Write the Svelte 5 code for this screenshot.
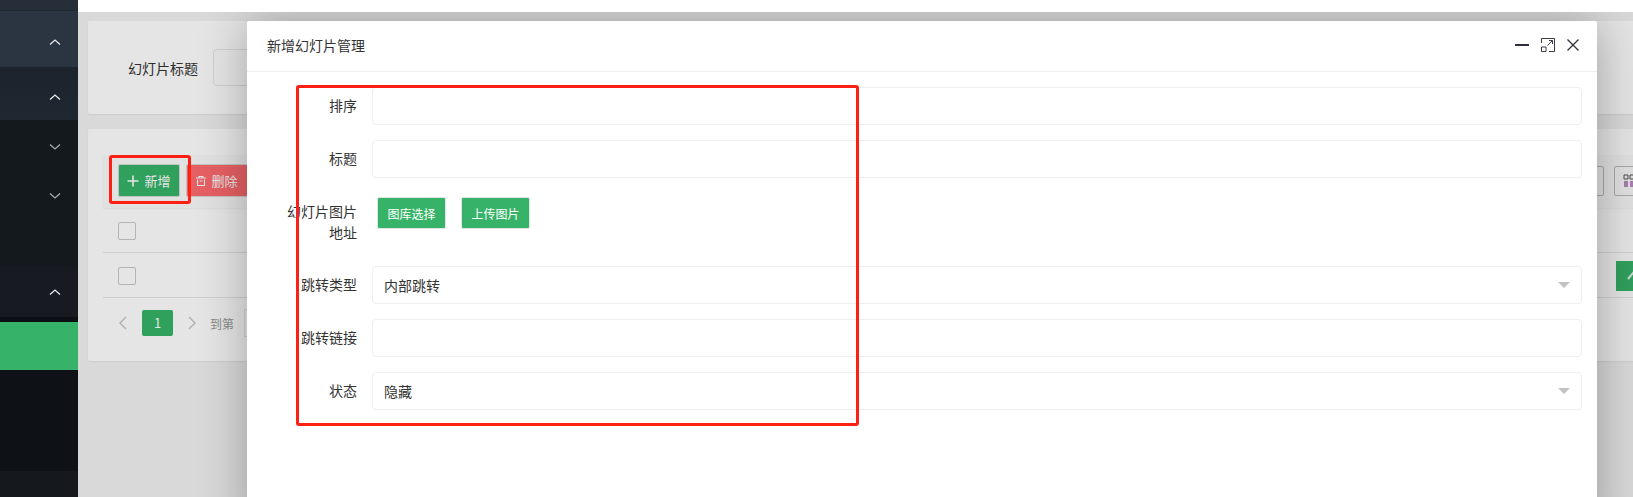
<script>
	const menu = [
		{ cls: "m1", dir: "up" },
		{ cls: "m2", dir: "up" },
		{ cls: "m3", dir: "down" },
		{ cls: "m4", dir: "down" },
		{ cls: "m5", dir: "none" },
		{ cls: "m6", dir: "up" },
	];
	const fields = [
		{ label: "跳转类型", value: "内部跳转", select: true },
		{ label: "跳转链接", value: "", select: false },
		{ label: "状态", value: "隐藏", select: true },
	];
</script>

<div class="page">
	<aside class="sidebar">
		<div class="side-top"></div>
		{#each menu as item}
			<div class="menu-item {item.cls}">
				{#if item.dir !== "none"}
					<svg width="14" height="8" viewBox="0 0 14 8" class:up={item.dir === "up"}>
						<path d="M2 1.5 L7 6 L12 1.5" fill="none" stroke={item.dir === "up" ? "#e6e8ea" : "#a4a9ae"} stroke-width="1.3" />
					</svg>
				{/if}
			</div>
		{/each}
		<div class="side-gap"></div>
		<div class="side-active"></div>
		<div class="side-dark"></div>
	</aside>

	<div class="main">
		<div class="topbar"></div>
		<div class="content">
			<section class="card search">
				<span class="search-label">幻灯片标题</span>
				<div class="search-input"></div>
			</section>

			<section class="card table">
				<div class="toolbar">
					<button class="btn add">
						<svg width="12" height="12" viewBox="0 0 12 12"><path d="M6 0.5 V11.5 M0.5 6 H11.5" stroke="#fff" stroke-width="1.6" /></svg>
						新增
					</button>
					<button class="btn del">
						<svg width="10" height="10" viewBox="0 0 10 10">
							<path d="M0 2 H10 M3 2 V0.5 H7 V2 M1.5 3.5 V9.5 H8.5 V3.5 M3.5 5 H6.5" fill="none" stroke="#fff" stroke-width="1.1" />
						</svg>
						删除
					</button>
					<div class="tools">
						<div class="tool"></div>
						<div class="tool cols">
							<svg width="16" height="14" viewBox="0 0 16 14">
								<path d="M1 1 H5 V5 H1 Z M7 1 H11 V5 H7 Z M13 1 H17 V5 H13 Z" fill="none" stroke="#555" />
								<path d="M2 7 V13 M4 7 V13 M8 7 V13 M10 7 V13" stroke="#7a1f8a" />
							</svg>
						</div>
					</div>
				</div>
				<div class="row"><span class="check"></span></div>
				<div class="row">
					<span class="check"></span>
					<span class="row-btn">
						<svg width="14" height="10" viewBox="0 0 14 10">
							<path d="M1 8 L6 2 L11 8" fill="none" stroke="#e6f2ea" stroke-width="2" />
						</svg>
					</span>
				</div>
				<div class="pager">
					<svg width="10" height="14" viewBox="0 0 10 14"><path d="M8 1 L2 7 L8 13" fill="none" stroke="#c4c4c4" stroke-width="1.4" /></svg>
					<span class="page-num">1</span>
					<svg width="10" height="14" viewBox="0 0 10 14"><path d="M2 1 L8 7 L2 13" fill="none" stroke="#c4c4c4" stroke-width="1.4" /></svg>
					<span class="goto">到第</span>
					<span class="goto-input"></span>
				</div>
			</section>
		</div>

		<div class="shade">
			<div class="modal">
				<header class="modal-head">
					<span>新增幻灯片管理</span>
					<div class="win-btns">
						<svg width="16" height="16" viewBox="0 0 16 16"><path d="M1 8 H15" stroke="#2f2f3f" stroke-width="2" /></svg>
						<svg width="16" height="16" viewBox="0 0 16 16">
							<path d="M1.5 6 V1.5 H14.5 V14.5 H9 M1.5 10 H6 V14.5 H1.5 Z M7.5 8.5 L12.5 3.5 M9 3.5 H12.5 V7" fill="none" stroke="#3a3a48" stroke-width="1" />
						</svg>
						<svg width="14" height="14" viewBox="0 0 14 14"><path d="M1.5 1.5 L12.5 12.5 M12.5 1.5 L1.5 12.5" stroke="#2f2f3f" stroke-width="1.3" /></svg>
					</div>
				</header>
				<div class="form">
					<div class="form-row">
						<div class="form-label">排序</div>
						<div class="form-input"></div>
					</div>
					<div class="form-row">
						<div class="form-label">标题</div>
						<div class="form-input"></div>
					</div>
					<div class="form-row">
						<div class="form-label">幻灯片图片地址</div>
						<div class="pick-btns">
							<button class="pick">图库选择</button>
							<button class="pick">上传图片</button>
						</div>
					</div>
					{#each fields as f}
						<div class="form-row">
							<div class="form-label">{f.label}</div>
							<div class="form-input">
								<span>{f.value}</span>
								{#if f.select}<i class="caret"></i>{/if}
							</div>
						</div>
					{/each}
				</div>
			</div>
		</div>
	</div>

	<div class="mark mark-add"></div>
	<div class="mark mark-form"></div>
</div>

<style>
	:global(body) {
		margin: 0;
		background: #fff;
	}
	.page {
		position: relative;
		display: flex;
		width: 1633px;
		height: 497px;
		overflow: hidden;
		font-family: "Noto Sans CJK SC", "Liberation Sans", sans-serif;
		font-size: 14px;
		color: #333;
	}
	button {
		font: inherit;
		cursor: pointer;
	}

	/* sidebar */
	.sidebar {
		flex: 0 0 78px;
		background: #15181d;
		display: flex;
		flex-direction: column;
	}
	.side-top {
		height: 10px;
		background: #252e39;
		border-bottom: 1px solid #1f2730;
	}
	.menu-item {
		display: flex;
		align-items: center;
		justify-content: center;
		padding-left: 32px;
		box-sizing: border-box;
	}
	.menu-item svg.up {
		transform: scaleY(-1);
	}
	.m1 { height: 56px; padding-top: 5px; background: #2b3542; }
	.m2 { height: 53px; padding-top: 7px; background: linear-gradient(#1c232d, #1f2731); }
	.m3 { height: 49px; padding-top: 5px; background: #14191e; }
	.m4 { height: 49px; padding-top: 4px; background: #14191e; }
	.m5 { height: 49px; background: #14191e; }
	.m6 { height: 50px; background: #171b21; }
	.side-gap { height: 5px; background: #0c0f13; }
	.side-active { height: 48px; background: #36b368; }
	.side-dark {
		flex: 1;
		background: linear-gradient(#0e1116 0, #0e1116 101px, #15181d 101px);
	}

	/* page behind the dialog */
	.main {
		position: relative;
		flex: 1;
		min-width: 0;
		background: #f2f2f2;
	}
	.topbar {
		height: 12px;
		background: #fff;
	}
	.content {
		padding: 9px 0 0 10px;
		margin-right: -40px;
	}
	.card {
		background: #fff;
		border-radius: 2px;
		box-shadow: 0 1px 2px rgba(0, 0, 0, 0.06);
	}
	.search {
		height: 93px;
		display: flex;
		align-items: center;
		padding-left: 40px;
	}
	.search-input {
		width: 200px;
		height: 37px;
		margin-left: 15px;
		box-sizing: border-box;
		border: 1px solid #e6e6e6;
		border-radius: 4px;
	}
	.table {
		margin-top: 15px;
		height: 232px;
		padding: 26px 0 0 15px;
		box-sizing: border-box;
	}
	.toolbar {
		display: flex;
		align-items: center;
		gap: 6px;
		height: 53px;
		padding: 0 0 2px 15px;
		box-sizing: border-box;
		background: #fbfbfb;
		box-shadow: 0 1px 2px rgba(0, 0, 0, 0.05);
	}
	.btn {
		height: 33px;
		width: 62px;
		display: flex;
		align-items: center;
		justify-content: center;
		gap: 5px;
		padding: 0;
		color: #fff;
		font-size: 13px;
		border: 1px solid #d9d9d9;
		border-radius: 2px;
	}
	.add { background: #36b368; }
	.del { background: #ff6b6f; }
	.tools {
		flex: none;
		margin-left: auto;
		margin-right: 29px;
		display: flex;
		gap: 10px;
		width: 70px;
	}
	.tool {
		flex: none;
		width: 30px;
		height: 30px;
		box-sizing: border-box;
		border: 1px solid #bbb;
		border-radius: 2px;
	}
	.cols {
		display: flex;
		align-items: center;
		padding-left: 8px;
	}
	.row {
		height: 45px;
		display: flex;
		align-items: center;
		justify-content: space-between;
		padding: 2px 0 0 15px;
		border-bottom: 1px solid #e6e6e6;
		box-sizing: border-box;
	}
	.check {
		width: 18px;
		height: 18px;
		box-sizing: border-box;
		border: 1px solid #c9c9c9;
		border-radius: 2px;
		background: #fff;
	}
	.row-btn {
		width: 57px;
		height: 30px;
		display: flex;
		align-items: center;
		padding-left: 11px;
		box-sizing: border-box;
		background: #36b368;
	}
	.pager {
		display: flex;
		align-items: center;
		padding: 11px 0 0 15px;
		color: #999;
		font-size: 12px;
	}
	.page-num {
		width: 31px;
		height: 26px;
		margin: 0 14px 0 14px;
		border-radius: 2px;
		background: #36b368;
		color: #fff;
		font-size: 13px;
		text-align: center;
		line-height: 26px;
	}
	.goto {
		margin-left: 13px;
	}
	.goto-input {
		width: 40px;
		height: 26px;
		margin-left: 10px;
		border: 1px solid #e6e6e6;
	}

	/* dialog */
	.shade {
		position: absolute;
		top: 12px;
		left: 0;
		right: 0;
		bottom: 0;
		overflow: hidden;
		background: rgba(0, 0, 0, 0.1);
	}
	.modal {
		position: absolute;
		top: 9px;
		left: 169px;
		width: 1350px;
		height: 520px;
		background: #fff;
		border-radius: 2px;
		box-shadow: 1px 1px 50px rgba(0, 0, 0, 0.3);
	}
	.modal-head {
		height: 51px;
		box-sizing: border-box;
		border-bottom: 1px solid #eee;
		display: flex;
		align-items: center;
		justify-content: space-between;
		padding: 0 17px 2px 20px;
		color: #333;
	}
	.win-btns {
		display: flex;
		align-items: center;
		gap: 10px;
	}
	.form {
		padding: 15px 15px 0 0;
		display: flex;
		flex-direction: column;
		gap: 15px;
	}
	.form-row {
		display: flex;
	}
	.form-label {
		flex: 0 0 110px;
		box-sizing: border-box;
		padding: 8px 0 0 28px;
		text-align: right;
		line-height: 21px;
	}
	.form-input {
		flex: 1;
		height: 38px;
		margin-left: 15px;
		padding: 0 11px;
		box-sizing: border-box;
		display: flex;
		align-items: center;
		justify-content: space-between;
		background: #fff;
		border: 1px solid #eee;
		border-radius: 4px;
	}
	.caret {
		width: 0;
		height: 0;
		border-left: 6px solid transparent;
		border-right: 6px solid transparent;
		border-top: 6px solid #c2c2c2;
	}
	.pick-btns {
		display: flex;
		gap: 15px;
		margin: 4px 0 0 20px;
		height: 54px;
	}
	.pick {
		width: 69px;
		height: 32px;
		padding: 0;
		background: #36b368;
		color: #fff;
		border: 1px solid #dfe5e2;
		border-radius: 2px;
		font-size: 12px;
	}

	/* red annotation boxes */
	.mark {
		position: absolute;
		box-sizing: border-box;
		border: 3px solid #ff2015;
		border-radius: 3px;
		pointer-events: none;
	}
	.mark-add {
		left: 109px;
		top: 155px;
		width: 82px;
		height: 49px;
	}
	.mark-form {
		left: 296px;
		top: 85px;
		width: 563px;
		height: 341px;
	}
</style>
